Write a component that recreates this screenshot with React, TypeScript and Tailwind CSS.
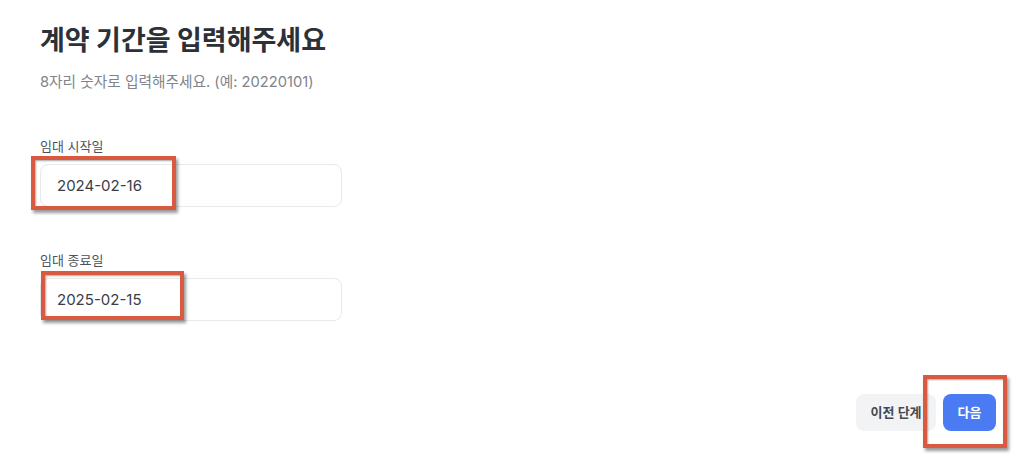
import { useState } from "react";

const font = "font-['Inter','Noto_Sans_CJK_KR',sans-serif]";

interface DateFieldProps {
  label: string;
  value: string;
  onChange: (v: string) => void;
  marker: string;
  className?: string;
}

function DateField({ label, value, onChange, marker, className }: DateFieldProps) {
  return (
    <div className={className}>
      <label className="block text-[13px] leading-[18px] text-[#4b5059]">{label}</label>
      <div className="relative mt-[9px] w-[302px]">
        <input
          value={value}
          onChange={(e) => onChange(e.target.value)}
          className="h-[43px] w-full rounded-lg border border-[#e8e9ec] bg-white px-4 text-[15px] text-[#3a3e45] outline-none"
        />
        {/* annotation box */}
        <div
          className={`pointer-events-none absolute border-4 border-[#d85b41] shadow-[2px_3px_3px_rgba(0,0,0,0.4),inset_1px_1px_2px_rgba(0,0,0,0.35)] ${marker}`}
        />
      </div>
    </div>
  );
}

export default function App() {
  const [start, setStart] = useState("2024-02-16");
  const [end, setEnd] = useState("2025-02-15");

  return (
    <div className={`min-h-[463px] bg-white pt-[24px] ${font}`}>
      <div className="px-[40px]">
        <h1 className="text-[27px] leading-[34px] font-bold text-[#2c3037]">
          계약 기간을 입력해주세요
        </h1>
        <p className="mt-[14px] text-[14.7px] leading-[20px] text-[#80848b]">
          8자리 숫자로 입력해주세요. (예: 20220101)
        </p>

        <DateField
          className="mt-[45px]"
          label="임대 시작일"
          value={start}
          onChange={setStart}
          marker="-left-[9px] -top-[8px] h-[54px] w-[145px]"
        />
        <DateField
          className="mt-[44px]"
          label="임대 종료일"
          value={end}
          onChange={setEnd}
          marker="left-[1px] -top-[7px] h-[49px] w-[143px]"
        />
      </div>

      <div className="mt-[73px] flex justify-end gap-[7px] pr-[28px]">
        <button className="h-[37px] w-[80px] rounded-lg bg-[#f2f3f5] text-[13px] font-semibold text-[#454950]">
          이전 단계
        </button>
        <div className="relative">
          <button className="h-[37px] w-[53px] rounded-lg bg-[#4a7bf2] text-[13px] font-semibold text-white">
            다음
          </button>
          <div className="pointer-events-none absolute -left-[20px] -top-[19px] h-[73px] w-[84px] border-4 border-[#d85b41] shadow-[2px_3px_3px_rgba(0,0,0,0.4),inset_1px_1px_2px_rgba(0,0,0,0.35)]" />
        </div>
      </div>
    </div>
  );
}
